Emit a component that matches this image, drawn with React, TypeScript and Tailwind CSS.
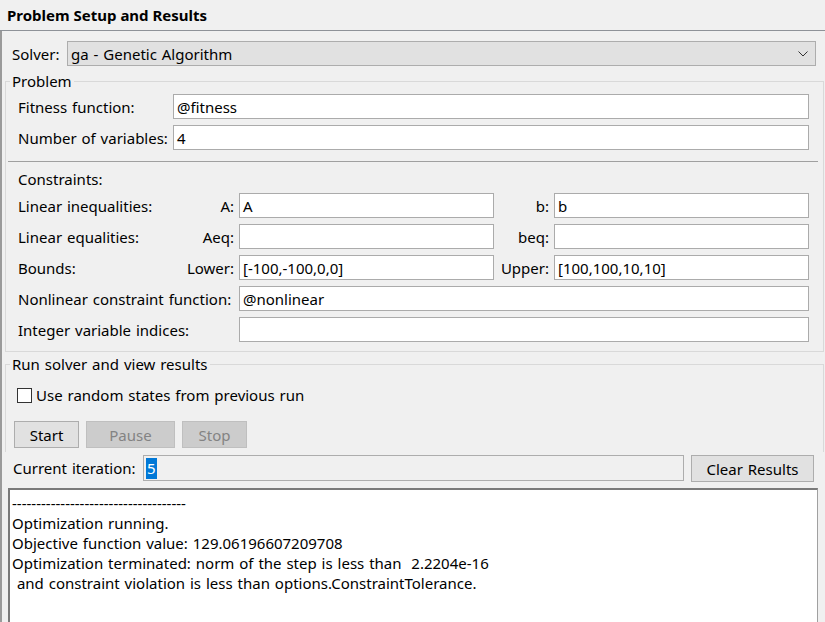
import React from "react";

const inputCls =
  "h-[25px] bg-white border border-[#ababab] pl-[3px] flex items-center leading-[20px] whitespace-nowrap overflow-hidden";

function Field({ w, value }: { w: string; value?: string }) {
  return <div className={`${inputCls} ${w}`}>{value}</div>;
}

function ConstraintRow({
  label,
  l1,
  v1,
  l2,
  v2,
}: {
  label: string;
  l1: string;
  v1?: string;
  l2: string;
  v2?: string;
}) {
  return (
    <div className="flex items-center h-[25px]">
      <div className="w-[221px] flex justify-between pr-[5px]">
        <span>{label}</span>
        <span>{l1}</span>
      </div>
      <Field w="w-[255px]" value={v1} />
      <div className="w-[60px] text-right pr-[5px]">{l2}</div>
      <Field w="w-[255px]" value={v2} />
    </div>
  );
}

function WideRow({ label, value }: { label: string; value?: string }) {
  return (
    <div className="flex items-center h-[25px]">
      <div className="w-[221px]">{label}</div>
      <Field w="w-[570px]" value={value} />
    </div>
  );
}

export default function App() {
  const dashes = "-".repeat(36);
  return (
    <div className="w-[825px] h-[622px] overflow-hidden bg-[#f0f0f0] text-black text-[15px] leading-[20px] [word-spacing:1px] font-['Noto_Sans',sans-serif] flex flex-col">
      {/* Title bar */}
      <div className="h-[31px] shrink-0 border-b border-[#8e9298] pl-[7px] flex items-center font-bold [word-spacing:0px]">
        Problem Setup and Results
      </div>

      {/* Body */}
      <div className="flex-1 border-l-2 border-[#9a9a9a] flex flex-col min-h-0">
        {/* Solver row */}
        <div className="mt-[10px] h-[25px] flex items-center pl-[10px]">
          <span className="w-[55px]">Solver:</span>
          <div className="w-[749px] h-[25px] bg-[#e1e1e1] border border-[#adadad] flex items-center pl-[3px] pr-[6px]">
            <span className="flex-1">ga - Genetic Algorithm</span>
            <svg width="10" height="6" viewBox="0 0 10 6" className="mr-[1px]">
              <polyline points="0.5,0.5 5,5 9.5,0.5" fill="none" stroke="#333" strokeWidth="1" />
            </svg>
          </div>
        </div>

        {/* Problem group */}
        <fieldset className="mt-[5px] ml-[3px] w-[819px] border border-[#d9d9d9] pl-[12px] pb-[9px]">
          <legend className="-ml-[8px] px-[2px] leading-[20px]">Problem</legend>
          <div className="mt-[3px] flex items-center h-[25px]">
            <div className="w-[155px]">Fitness function:</div>
            <Field w="w-[636px]" value="@fitness" />
          </div>
          <div className="mt-[6px] flex items-center h-[25px]">
            <div className="w-[155px]">Number of variables:</div>
            <Field w="w-[636px]" value="4" />
          </div>
          <div className="mt-[11px] -ml-[10px] w-[810px] h-px bg-[#a0a0a0]" />
          <div className="mt-[4px] h-[25px] flex items-center">Constraints:</div>
          <div className="mt-[2px] flex flex-col gap-[6px]">
            <ConstraintRow label="Linear inequalities:" l1="A:" v1="A" l2="b:" v2="b" />
            <ConstraintRow label="Linear equalities:" l1="Aeq:" l2="beq:" />
            <ConstraintRow label="Bounds:" l1="Lower:" v1="[-100,-100,0,0]" l2="Upper:" v2="[100,100,10,10]" />
            <WideRow label="Nonlinear constraint function:" value="@nonlinear" />
            <WideRow label="Integer variable indices:" />
          </div>
        </fieldset>

        {/* Run solver group */}
        <fieldset className="mt-[2px] ml-[3px] w-[819px] border border-b-0 border-[#d9d9d9] pb-[4px]">
          <legend className="ml-[4px] px-[2px] leading-[20px]">Run solver and view results</legend>
          <div className="mt-[11px] h-[20px] flex items-center pl-[11px]">
            <div className="w-[15px] h-[15px] border border-[#333] bg-white" />
            <span className="ml-[4px]">Use random states from previous run</span>
          </div>
          <div className="mt-[16px] pl-[8px] flex gap-[7px]">
            <div className="w-[65px] h-[27px] bg-[#e1e1e1] border border-[#adadad] flex items-center justify-center">
              Start
            </div>
            <div className="w-[89px] h-[27px] bg-[#cccccc] border border-[#bfbfbf] text-[#838383] flex items-center justify-center">
              Pause
            </div>
            <div className="w-[65px] h-[27px] bg-[#cccccc] border border-[#bfbfbf] text-[#838383] flex items-center justify-center">
              Stop
            </div>
          </div>
        </fieldset>

        {/* Current iteration row */}
        <div className="mt-[3px] pl-[11px] flex items-start">
          <div className="w-[130px] h-[26px] flex items-center">Current iteration:</div>
          <div className="w-[541px] h-[26px] bg-[#f0f0f0] border border-[#adadad] flex items-center pl-[2px]">
            <span className="bg-[#0078d7] text-white leading-[21px] px-px">5</span>
          </div>
          <div className="ml-[7px] w-[123px] h-[27px] bg-[#e1e1e1] border border-[#adadad] flex items-center justify-center">
            Clear Results
          </div>
        </div>

        {/* Output */}
        <div className="mt-[6px] ml-[6px] w-[810px] flex-1 bg-white border-t-2 border-l-2 border-r border-[#7a7a7a] border-r-[#a0a0a0] pt-[3px] pl-[2px] whitespace-pre">
          <div>{dashes}</div>
          <div>Optimization running.</div>
          <div>Objective function value: 129.06196607209708</div>
          <div>Optimization terminated: norm of the step is less than  2.2204e-16</div>
          <div> and constraint violation is less than options.ConstraintTolerance.</div>
        </div>
      </div>
    </div>
  );
}
